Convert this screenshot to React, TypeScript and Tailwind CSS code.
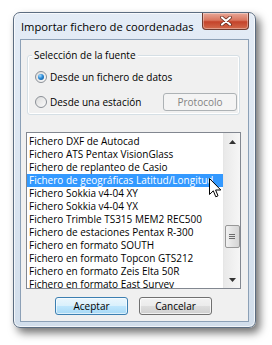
import React from "react";

const formats = [
  "Fichero DXF de Autocad",
  "Fichero ATS Pentax VisionGlass",
  "Fichero de replanteo de Casio",
  "Fichero de geográficas Latitud/Longitud",
  "Fichero Sokkia v4-04 XY",
  "Fichero Sokkia v4-04 YX",
  "Fichero Trimble TS315 MEM2 REC500",
  "Fichero de estaciones Pentax R-300",
  "Fichero en formato SOUTH",
  "Fichero en formato Topcon GTS212",
  "Fichero en formato Zeis Elta 50R",
  "Fichero en formato East Survey",
];

function Radio({ checked }: { checked: boolean }) {
  return (
    <span className="flex h-[12px] w-[12px] shrink-0 items-center justify-center rounded-full border border-[#8a8f96] bg-gradient-to-br from-[#dcdcdc] to-[#fbfbfb]">
      {checked && (
        <span className="h-[6px] w-[6px] rounded-full bg-[radial-gradient(circle_at_35%_30%,#a9dcff_0%,#2a8ad6_45%,#0c4d8c_100%)]" />
      )}
    </span>
  );
}

function WinButton({ label, focused }: { label: string; focused?: boolean }) {
  return (
    <button
      type="button"
      className={`h-[18px] w-[73px] rounded-[3px] border text-[10px] leading-none text-black ${
        focused
          ? "border-[#3c7fb1] bg-[linear-gradient(#eaf6fd_0%,#d9f0fc_50%,#bee6fd_51%,#a7d9f5_100%)] shadow-[inset_0_0_0_1px_rgba(255,255,255,0.6)]"
          : "border-[#707070] bg-[linear-gradient(#f2f2f2_0%,#ebebeb_50%,#dddddd_51%,#cfcfcf_100%)] shadow-[inset_0_0_0_1px_rgba(255,255,255,0.7)]"
      }`}
    >
      {label}
    </button>
  );
}

export default function App() {
  return (
    <div
      className="relative h-[345px] w-[272px] bg-white pl-[13px] pt-[12px] text-black"
      style={{ fontFamily: "'Open Sans', 'Noto Sans', sans-serif" }}
    >
      <div className="flex h-[316px] w-[243px] flex-col rounded-[7px] border border-[#5c6d81] bg-gradient-to-b from-[#e4ecf6] to-[#d2deeb] px-[6px] pb-[5px] shadow-[4px_5px_9px_rgba(0,0,0,0.55),inset_0_0_0_1px_rgba(255,255,255,0.7)]">
        {/* title bar */}
        <div className="flex h-[26px] shrink-0 items-start justify-between">
          <span className="pl-[1px] pt-[6px] text-[11.2px] leading-[15px] text-black">
            Importar fichero de coordenadas
          </span>
          <div className="flex h-[17px] w-[47px] items-center justify-center rounded-b-[4px] border border-t-0 border-[#6e3b30] bg-[linear-gradient(#e8a898_0%,#d9765f_45%,#c4432a_55%,#d26a4c_100%)] shadow-[inset_0_0_0_1px_rgba(255,255,255,0.35)]">
            <svg width="12" height="10" viewBox="0 0 12 10">
              <path d="M2 1.5 L10 8.5 M10 1.5 L2 8.5" stroke="#5a2418" strokeWidth="3.6" strokeLinecap="round" />
              <path d="M2 1.5 L10 8.5 M10 1.5 L2 8.5" stroke="#ffffff" strokeWidth="2.2" strokeLinecap="round" />
            </svg>
          </div>
        </div>

        {/* client area */}
        <div className="flex flex-1 flex-col border border-[#8ca0b6] bg-[#f0f0f0] text-[10px]">
          <div className="relative ml-[6px] mt-[15px] h-[60px] w-[213px] rounded-[3px] border border-[#d5dfe5] pl-[7px] pr-[2px] pt-[15px] shadow-[inset_0_0_0_1px_#ffffff]">
            <span className="absolute -top-[8px] left-[4px] bg-[#f0f0f0] px-[2px] leading-[14px]">
              Selección de la fuente
            </span>
            <div className="flex h-[12px] items-center gap-[3px]">
              <Radio checked />
              <span>Desde un fichero de datos</span>
            </div>
            <div className="mt-[10px] flex h-[18px] items-center justify-between">
              <div className="flex items-center gap-[3px]">
                <Radio checked={false} />
                <span>Desde una estación</span>
              </div>
              <div className="flex h-[18px] w-[74px] items-center justify-center rounded-[3px] border border-[#adb2b5] bg-[#f4f4f4] text-[#838383]">
                Protocolo
              </div>
            </div>
          </div>

          {/* list */}
          <div className="ml-[5px] mt-[17px] flex h-[157px] w-[215px] border border-[#828790] bg-white">
            <div className="flex-1 overflow-hidden pt-[2px]">
              {formats.map((f, i) => (
                <div
                  key={f}
                  className={`h-[13px] whitespace-nowrap pl-[2px] leading-[13px] ${
                    i === 3 ? "bg-[#3399ff] text-white" : ""
                  }`}
                >
                  {f}
                </div>
              ))}
            </div>
            <div className="flex w-[17px] flex-col border-l border-[#e6e6e6] bg-[linear-gradient(90deg,#e9e9e9,#f6f6f6)]">
              <div className="flex h-[17px] items-center justify-center">
                <svg width="7" height="4" viewBox="0 0 7 4">
                  <path d="M0 4 L3.5 0 L7 4 Z" fill="#333" />
                </svg>
              </div>
              <div className="flex-1 pt-[75px]">
                <div className="mx-auto flex h-[23px] w-[15px] flex-col items-center justify-center gap-[1px] rounded-[2px] border border-[#989898] bg-[linear-gradient(90deg,#f2f2f2,#e2e2e2_50%,#d5d5d5)]">
                  <span className="h-px w-[6px] bg-[#6b6b6b]" />
                  <span className="h-px w-[6px] bg-[#6b6b6b]" />
                  <span className="h-px w-[6px] bg-[#6b6b6b]" />
                </div>
              </div>
              <div className="flex h-[17px] items-center justify-center">
                <svg width="7" height="4" viewBox="0 0 7 4">
                  <path d="M0 0 L7 0 L3.5 4 Z" fill="#333" />
                </svg>
              </div>
            </div>
          </div>

          <div className="ml-[34px] mt-[8px] flex gap-[11px]">
            <WinButton label="Aceptar" focused />
            <WinButton label="Cancelar" />
          </div>
        </div>
      </div>

      {/* mouse pointer */}
      <svg className="absolute left-[209px] top-[178px]" width="13" height="21" viewBox="0 0 13 21">
        <path
          d="M0.5 0.5 L0.5 16.5 L4.3 12.8 L6.8 18.8 L9 17.8 L6.6 12 L11.8 12 Z"
          fill="#ffffff"
          stroke="#000000"
          strokeWidth="1"
          strokeLinejoin="round"
        />
      </svg>
    </div>
  );
}
